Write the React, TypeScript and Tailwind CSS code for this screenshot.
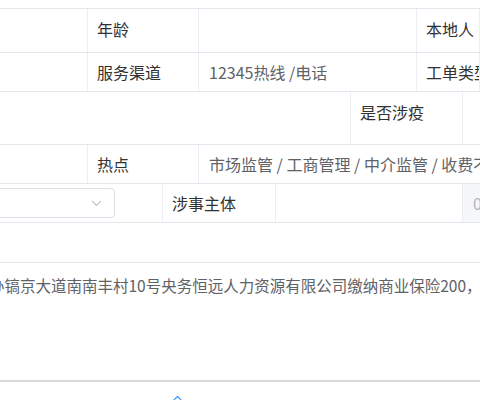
import React from 'react';

const font = { fontFamily: '"Noto Sans CJK SC", "Noto Sans", sans-serif' };

function Cell({
  w,
  label,
  children,
  className = '',
}: {
  w?: string;
  label?: boolean;
  children?: React.ReactNode;
  className?: string;
}) {
  return (
    <div
      className={`${w ?? 'flex-1'} shrink-0 border-r border-[#ebeef5] px-[9px] whitespace-nowrap overflow-hidden text-[16px] leading-[20px] ${
        label ? 'text-[#303133]' : 'text-[#606266]'
      } ${className}`}
    >
      {children}
    </div>
  );
}

export default function App() {
  return (
    <div className="w-[480px] h-[400px] overflow-hidden bg-white" style={font}>
      <div className="pt-[8px]">
        <div className="border-t border-[#e4e7ed]">
          {/* row 1 */}
          <div className="flex h-[44px] border-b border-[#e4e7ed]">
            <Cell w="w-[88px]" />
            <Cell w="w-[111px]" label className="pt-[10px]">年龄</Cell>
            <Cell w="w-[218px]" />
            <Cell label className="pt-[10px]">本地人</Cell>
          </div>
          {/* row 2 */}
          <div className="flex h-[39px] border-b border-[#e4e7ed] items-stretch">
            <Cell w="w-[88px]" />
            <Cell w="w-[111px]" label className="flex items-center">服务渠道</Cell>
            <Cell w="w-[218px]" className="flex items-center pl-[10px]">12345热线 /电话</Cell>
            <Cell label className="flex items-center">工单类型</Cell>
          </div>
          {/* row 3 */}
          <div className="flex h-[53px] border-b border-[#e4e7ed]">
            <Cell w="w-[351px]" />
            <Cell w="w-[112px]" label className="pt-[10px]">是否涉疫</Cell>
            <Cell />
          </div>
          {/* row 4 */}
          <div className="flex h-[39px] border-b border-[#e4e7ed]">
            <Cell w="w-[88px]" />
            <Cell w="w-[111px]" label className="flex items-center">热点</Cell>
            <Cell className="flex items-center pl-[10px] border-r-0">
              市场监管 / 工商管理 / 中介监管 / 收费不合理
            </Cell>
          </div>
          {/* row 5 */}
          <div className="flex h-[39px] border-b border-[#e4e7ed]">
            <div className="w-[163px] shrink-0 border-r border-[#ebeef5] flex items-center">
              <div className="w-[116px] h-[30px] -ml-px border border-[#dcdfe6] rounded-r-[4px] flex items-center justify-end pr-[12px]">
                <svg width="11" height="7" viewBox="0 0 11 7" fill="none">
                  <path d="M1 1l4.5 4.5L10 1" stroke="#c0c4cc" strokeWidth="1.2" />
                </svg>
              </div>
            </div>
            <Cell w="w-[113px]" label className="flex items-center">涉事主体</Cell>
            <Cell w="w-[187px]" />
            <div className="flex-1 bg-[#f5f7fa] flex items-center pl-[10px] text-[16px] text-[#b4b8bf]">0</div>
          </div>
        </div>
      </div>

      {/* textarea */}
      <div className="mt-[39px] h-[120px] border-t border-[#e4e7ed] border-b-2 border-b-[#d9d9d9] pt-[12px]">
        <div className="ml-[-11px] whitespace-nowrap text-[15.5px] leading-[20px] text-[#606266]">
          办镐京大道南南丰村10号央务恒远人力资源有限公司缴纳商业保险200，
        </div>
      </div>

      <div className="flex pl-[172px] pt-[13px]">
        <svg width="11" height="10" viewBox="0 0 11 10">
          <path d="M5.5 0.5 L10.5 5.5 L8.8 5.5 L5.5 2.4 L2.2 5.5 L0.5 5.5 Z" fill="#409eff" />
        </svg>
      </div>
    </div>
  );
}
